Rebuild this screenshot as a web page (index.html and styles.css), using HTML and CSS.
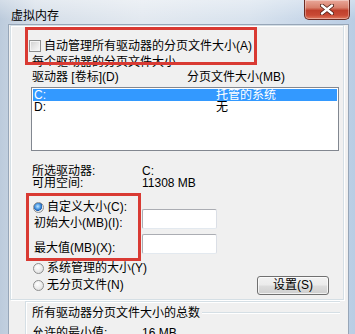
FILE: index.html
```html
<!DOCTYPE html>
<html>
<head>
<meta charset="utf-8">
<link rel="stylesheet" href="styles.css">
</head>
<body>
<div class="window">
  <div class="titlebar">
    <span class="title">虚拟内存</span>
    <div class="close">
      <svg width="14" height="11" viewBox="0 0 14 11">
        <path d="M2 1.5 L12 9.5 M12 1.5 L2 9.5" stroke="#4a1a12" stroke-width="4" stroke-linecap="round"/>
        <path d="M2 1.5 L12 9.5 M12 1.5 L2 9.5" stroke="#ffffff" stroke-width="2.4" stroke-linecap="round"/>
      </svg>
    </div>
  </div>
  <div class="client">
    <div class="panel">
      <div class="check-row"><span class="checkbox"></span><span>自动管理所有驱动器的分页文件大小(A)</span></div>
      <div class="text-row">每个驱动器的分页文件大小</div>
      <div class="cols"><span class="col1">驱动器 [卷标](D)</span><span>分页文件大小(MB)</span></div>
      <div class="listbox">
        <div class="lrow sel"><span class="lcol1">C:</span><span>托管的系统</span></div>
        <div class="lrow"><span class="lcol1">D:</span><span>无</span></div>
      </div>
      <div class="info first"><span class="key">所选驱动器:</span><span>C:</span></div>
      <div class="info"><span class="key">可用空间:</span><span>11308 MB</span></div>
      <div class="radio-row custom"><span class="radio on"></span><span>自定义大小(C):</span></div>
      <div class="fields">
        <div class="field"><span class="fkey">初始大小(MB)(I):</span><span class="input"></span></div>
        <div class="field"><span class="fkey">最大值(MB)(X):</span><span class="input"></span></div>
      </div>
      <div class="radio-row sys"><span class="radio"></span><span>系统管理的大小(Y)</span></div>
      <div class="last-row">
        <div class="radio-row"><span class="radio"></span><span>无分页文件(N)</span></div>
        <div class="button">设置(S)</div>
      </div>
    </div>
    <div class="group2">
      <div class="g2-title"><span>所有驱动器分页文件大小的总数</span><span class="g2-line"></span></div>
      <div class="info"><span class="key">允许的最小值:</span><span>16 MB</span></div>
    </div>
  </div>
  <div class="redbox r1"></div>
  <div class="redbox r2"></div>
</div>
</body>
</html>
```
FILE: styles.css
```css
* { box-sizing: border-box; }
html, body {
  margin: 0;
  padding: 0;
  width: 355px;
  height: 334px;
  overflow: hidden;
  font-family: "Liberation Sans", "Noto Sans CJK SC", sans-serif;
  font-size: 12px;
  color: #000;
}
.window {
  position: relative;
  width: 355px;
  height: 334px;
  display: flex;
  flex-direction: column;
  background: linear-gradient(90deg, #bccbdc 0%, #d6dfe9 10%, #e3e9f0 40%, #d9e3ee 70%, #b9cde4 100%);
}
.titlebar {
  height: 28px;
  display: flex;
  justify-content: space-between;
  align-items: flex-start;
  background: linear-gradient(180deg, rgba(255,255,255,0.35), rgba(255,255,255,0) 80%);
}
.title {
  padding: 8px 0 0 11px;
  line-height: 16px;
  font-size: 12px;
  color: #000;
}
.close {
  width: 46px;
  height: 20px;
  margin-right: 5px;
  border: 1px solid #6b2b22;
  border-top: none;
  border-radius: 0 0 5px 5px;
  background: linear-gradient(180deg, #e9a89a 0%, #d8806c 40%, #c0402c 55%, #c94a35 80%, #e07a5f 100%);
  box-shadow: inset 0 0 0 1px rgba(255,255,255,0.35);
  display: flex;
  align-items: center;
  justify-content: center;
}
.client {
  flex: 1;
  margin: 0 6px 0 8px;
  background: #f0f0f0;
  border: 1px solid #97a6b8;
  border-bottom: none;
}
.panel {
  width: 334px;
  margin-left: 1px;
  border: 1px solid #d5dfe5;
  box-shadow: inset 1px 1px 0 #ffffff, 1px 1px 0 #ffffff;
  padding: 0 0 5px 21px;
}
.check-row {
  margin: 13px 0 0 -3px;
  height: 14px;
  line-height: 14px;
  display: flex;
  align-items: center;
  gap: 3px;
}
.checkbox {
  width: 12px;
  height: 12px;
  border: 1px solid #8e8f8f;
  background: linear-gradient(135deg, #cfcfcf 0%, #e6e6e6 50%, #fbfbfb 100%);
  box-shadow: inset 0 0 0 1px #f4f4f4;
}
.text-row {
  margin-top: 2px;
  line-height: 14px;
  height: 14px;
}
.cols {
  margin-top: 1px;
  display: flex;
  line-height: 14px;
  height: 14px;
}
.col1 { width: 155px; }
.listbox {
  margin: 3px 0 0 -1px;
  width: 308px;
  height: 64px;
  background: #fff;
  border: 1px solid #828790;
  padding: 1px;
}
.lrow {
  display: flex;
  height: 12px;
  line-height: 12px;
  padding-left: 1px;
}
.lrow.sel {
  background: #3399ff;
  color: #fff;
}
.lcol1 { width: 182px; }
.info {
  display: flex;
  line-height: 12px;
  height: 12px;
}
.info.first { margin-top: 14px; }
.key { width: 110px; }
.radio-row {
  display: flex;
  align-items: center;
  gap: 3px;
  line-height: 12px;
  height: 12px;
  margin-left: 1px;
}
.radio-row.custom { margin-top: 12px; }
.radio-row.sys { margin-top: 8px; }
.radio {
  width: 11px;
  height: 11px;
  border-radius: 50%;
  border: 1px solid #8e8f8f;
  background: radial-gradient(circle at 40% 35%, #ffffff 0%, #e8e8e8 60%, #d2d2d2 100%);
}
.radio.on {
  background:
    radial-gradient(circle at 42% 38%, #bfe3ff 0%, #5aa5ea 30%, #1e5fb4 55%, transparent 60%),
    radial-gradient(circle, #f6f6f6 0%, #dedede 100%);
}
.fields {
  margin-top: -4px;
  display: flex;
  flex-direction: column;
  gap: 5px;
}
.field {
  display: flex;
  height: 20px;
  padding-left: 2px;
}
.fkey {
  width: 108px;
  padding-top: 8px;
  line-height: 12px;
}
.input {
  width: 75px;
  height: 20px;
  background: #fff;
  border: 1px solid #abadb3;
  border-top-color: #abadb3;
  border-bottom-color: #e3e9ef;
  border-right-color: #dbdfe6;
  border-radius: 2px;
}
.last-row {
  margin-top: 2px;
  height: 18px;
  display: flex;
  align-items: center;
  justify-content: space-between;
  width: 297px;
}
.button {
  width: 72px;
  height: 19px;
  border: 1px solid #707070;
  border-radius: 3px;
  background: linear-gradient(180deg, #f2f2f2 0%, #ebebeb 48%, #dddddd 52%, #cfcfcf 100%);
  box-shadow: inset 0 0 0 1px rgba(255,255,255,0.7);
  text-align: center;
  line-height: 17px;
}
.group2 {
  margin: 1px 0 0 16px;
  width: 315px;
  border-left: 1px solid #d5dfe5;
  border-top: 1px solid #d5dfe5;
  box-shadow: inset 1px 1px 0 #ffffff;
  padding: 4px 0 0 6px;
}
.g2-title {
  display: flex;
  align-items: center;
  line-height: 14px;
  height: 14px;
  gap: 2px;
}
.g2-line {
  flex: 1;
  height: 2px;
  border-top: 1px solid #d5dfe5;
  border-bottom: 1px solid #ffffff;
}
.group2 .info { margin-top: 7px; }
.redbox {
  position: absolute;
  border: 3px solid #d93a33;
}
.r1 { left: 25px; top: 27px; width: 232px; height: 38px; }
.r2 { left: 26px; top: 193px; width: 115px; height: 68px; }
```
